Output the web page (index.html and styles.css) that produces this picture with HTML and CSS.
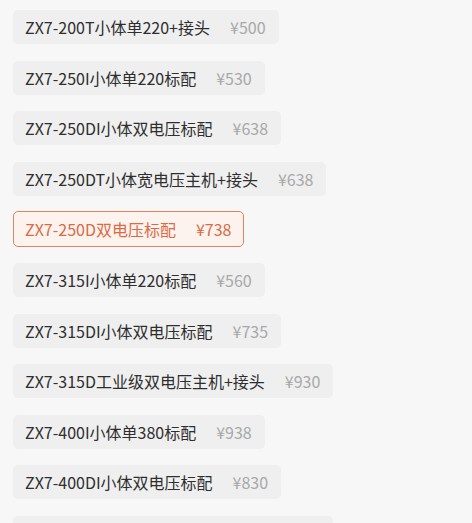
FILE: index.html
```html
<!DOCTYPE html>
<html lang="zh-CN">
<head>
    <meta charset="UTF-8">
    <meta name="viewport" content="width=device-width, initial-scale=1.0">
    <title>规格选择</title>
    <link rel="stylesheet" href="styles.css">
</head>
<body>
    <div class="spec-list">
        <div class="spec-item"><span class="spec-name">ZX7-200T小体单220+接头</span><span class="spec-price">¥500</span></div>
        <div class="spec-item"><span class="spec-name">ZX7-250I小体单220标配</span><span class="spec-price">¥530</span></div>
        <div class="spec-item"><span class="spec-name">ZX7-250DI小体双电压标配</span><span class="spec-price">¥638</span></div>
        <div class="spec-item"><span class="spec-name">ZX7-250DT小体宽电压主机+接头</span><span class="spec-price">¥638</span></div>
        <div class="spec-item active"><span class="spec-name">ZX7-250D双电压标配</span><span class="spec-price">¥738</span></div>
        <div class="spec-item"><span class="spec-name">ZX7-315I小体单220标配</span><span class="spec-price">¥560</span></div>
        <div class="spec-item"><span class="spec-name">ZX7-315DI小体双电压标配</span><span class="spec-price">¥735</span></div>
        <div class="spec-item"><span class="spec-name">ZX7-315D工业级双电压主机+接头</span><span class="spec-price">¥930</span></div>
        <div class="spec-item"><span class="spec-name">ZX7-400I小体单380标配</span><span class="spec-price">¥938</span></div>
        <div class="spec-item"><span class="spec-name">ZX7-400DI小体双电压标配</span><span class="spec-price">¥830</span></div>
        <div class="spec-item spec-more"></div>
    </div>
</body>
</html>
```

FILE: styles.css
```css
body {
    margin: 0;
    background-color: #f7f7f7;
    font-family: "Noto Sans CJK SC", "Noto Sans", sans-serif;
    overflow: hidden;
}
.spec-list {
    display: flex;
    flex-direction: column;
    align-items: flex-start;
    gap: 16.6px;
    padding: 10px 13px;
}
.spec-item {
    display: flex;
    align-items: center;
    gap: 20px;
    height: 34px;
    padding: 0 13px 0 12px;
    border-radius: 5px;
    background-color: #efefef;
    box-sizing: border-box;
    font-size: 16px;
}
.spec-name {
    color: #2e2e2e;
}
.spec-price {
    color: #a8a8a8;
}
.spec-more {
    width: 320px;
}
.spec-item.active {
    height: 36px;
    margin: -1px 0;
    border: 1.5px solid #e0845f;
    background-color: #fdf3ee;
    padding: 0 12px 0 11px;
}
.spec-item.active .spec-name,
.spec-item.active .spec-price {
    color: #d96b45;
}
```
